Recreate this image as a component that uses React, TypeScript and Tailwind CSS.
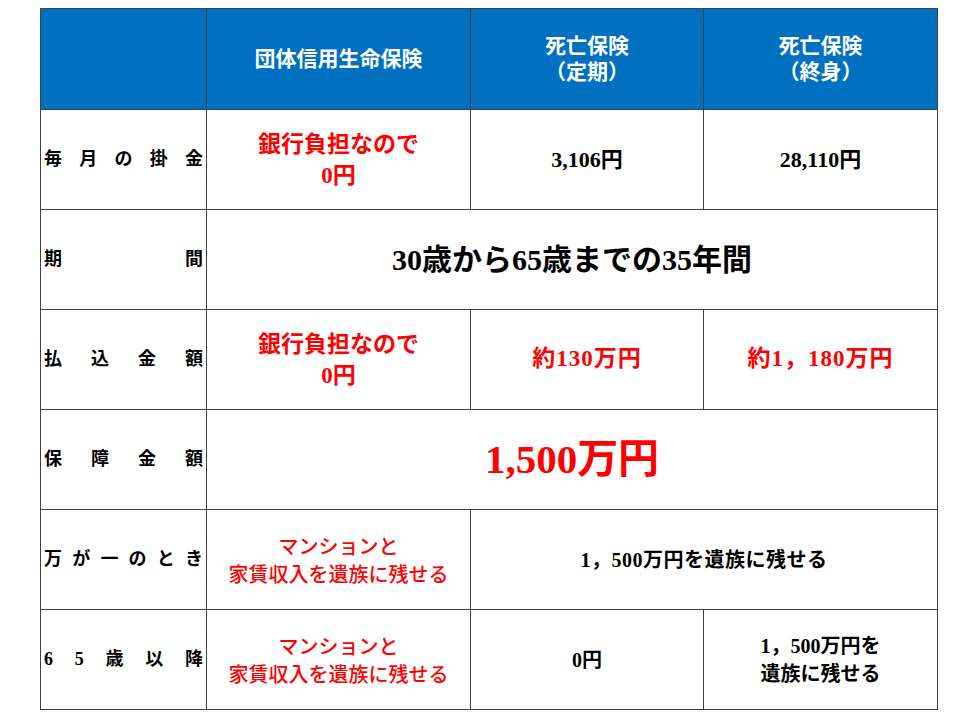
const FONT = "font-['Liberation_Serif','Noto_Sans_CJK_JP',serif]";
const GOTHIC = "font-['Noto_Sans_CJK_JP',sans-serif]";

const Label = ({ chars }: { chars: string[] }) => (
  <div className="flex items-center justify-between bg-white px-[3px] text-[18px] font-bold text-black">
    {chars.map((c, i) => (
      <span key={i}>{c}</span>
    ))}
  </div>
);

const Cell = ({ children, className = '' }: { children: React.ReactNode; className?: string }) => (
  <div className={`flex flex-col items-center justify-center bg-white text-center ${className}`}>{children}</div>
);

const Head = ({ children }: { children: React.ReactNode }) => (
  <div className="flex flex-col items-center justify-center bg-[#0070c0] text-center text-[21px] font-bold leading-[26px] text-white">
    {children}
  </div>
);

const BankZero = () => (
  <Cell className="text-[23px] font-bold leading-[31px] text-[#ff0000]">
    <span>銀行負担なので</span>
    <span>0円</span>
  </Cell>
);

const Mansion = () => (
  <Cell className={`${GOTHIC} text-[20px] font-medium leading-[28px] text-[#ff0000]`}>
    <span>マンションと</span>
    <span>家賃収入を遺族に残せる</span>
  </Cell>
);

export default function App() {
  return (
    <div className={`h-[720px] w-[960px] bg-white pl-[40px] pt-[8px] ${FONT}`}>
      <div className="grid w-[898px] grid-cols-[165px_263px_232px_233px] grid-rows-[100px_repeat(6,99px)] gap-px bg-[#404040] p-px">
        <div className="bg-[#0070c0]" />
        <Head>団体信用生命保険</Head>
        <Head>
          <span>死亡保険</span>
          <span>（定期）</span>
        </Head>
        <Head>
          <span>死亡保険</span>
          <span>（終身）</span>
        </Head>

        <Label chars={['毎', '月', 'の', '掛', '金']} />
        <BankZero />
        <Cell className="text-[22px] font-bold">3,106円</Cell>
        <Cell className="text-[22px] font-bold">28,110円</Cell>

        <Label chars={['期', '間']} />
        <Cell className="col-span-3 text-[30px] font-bold">30歳から65歳までの35年間</Cell>

        <Label chars={['払', '込', '金', '額']} />
        <BankZero />
        <Cell className="text-[23px] font-bold tracking-[1px] text-[#ff0000]">約130万円</Cell>
        <Cell className="text-[23px] font-bold tracking-[1px] text-[#ff0000]">約1，180万円</Cell>

        <Label chars={['保', '障', '金', '額']} />
        <Cell className="col-span-3 text-[41px] font-bold text-[#ff0000]">1,500万円</Cell>

        <Label chars={['万', 'が', '一', 'の', 'と', 'き']} />
        <Mansion />
        <Cell className="col-span-2 text-[20px] font-bold tracking-[0.5px]">1，500万円を遺族に残せる</Cell>

        <Label chars={['6', '5', '歳', '以', '降']} />
        <Mansion />
        <Cell className="text-[20px] font-bold">0円</Cell>
        <Cell className="text-[20px] font-bold leading-[28px]">
          <span>1，500万円を</span>
          <span>遺族に残せる</span>
        </Cell>
      </div>
    </div>
  );
}
